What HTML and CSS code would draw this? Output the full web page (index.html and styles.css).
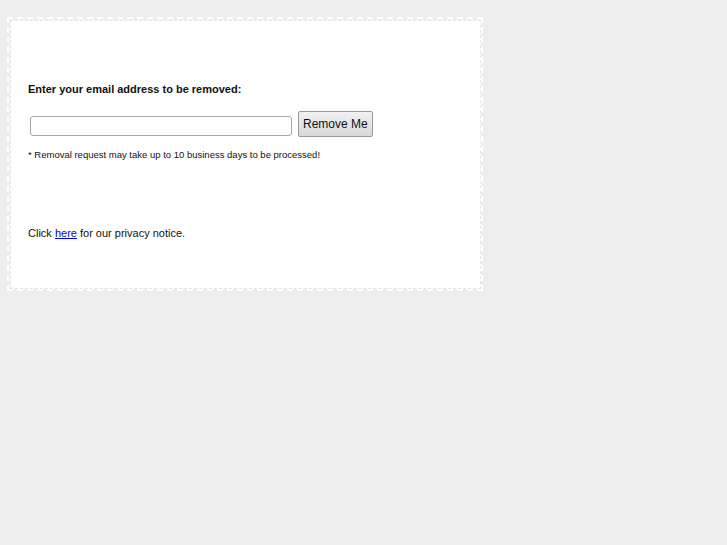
FILE: index.html
```html
<!DOCTYPE html>
<html>
<head>
<meta charset="utf-8">
<link rel="stylesheet" href="styles.css">
</head>
<body>
<div class="frame">
  <div class="panel">
    <p class="label">Enter your email address to be removed:</p>
    <form class="row" onsubmit="return false">
      <input class="email" type="text">
      <button class="btn" type="button">Remove Me</button>
    </form>
    <p class="note">* Removal request may take up to 10 business days to be processed!</p>
    <p class="privacy">Click <a class="link" href="#">here</a> for our privacy notice.</p>
  </div>
</div>
</body>
</html>
```
FILE: styles.css
```css
html, body {
  margin: 0;
  padding: 0;
  background: #eeeeee;
  font-family: "Liberation Sans", Arial, sans-serif;
  color: #111;
}
body {
  padding: 17px 0 0 7px;
}
.frame {
  width: 471px;
  border: 2px dashed #ffffff;
  padding: 1px 0 0 1px;
  box-sizing: content-box;
}
.panel {
  background: #ffffff;
  border: 1px dashed #e6e6e6;
  height: 267px;
  padding: 0 17px;
  overflow: hidden;
}
.label {
  margin: 61px 0 0;
  font-size: 11px;
  font-weight: bold;
  line-height: 14px;
}
.row {
  display: flex;
  align-items: center;
  gap: 6px;
  margin: 15px 0 0 2px;
}
.email {
  width: 262px;
  height: 20px;
  box-sizing: border-box;
  border: 1px solid #a8a8a8;
  border-radius: 3px;
  margin: 3px 0 0;
  padding: 0 4px;
  background: #fff;
}
.btn {
  height: 26px;
  padding: 0 4px;
  border: 1px solid #9a9a9a;
  border-radius: 2px;
  background: linear-gradient(#f2f2f2, #d8d8d8);
  font-family: "Liberation Sans", Arial, sans-serif;
  font-size: 12px;
  color: #111;
}
.note {
  margin: 12px 0 0;
  font-size: 9.5px;
  line-height: 12px;
}
.privacy {
  margin: 65px 0 0;
  font-size: 11px;
  line-height: 14px;
}
.link, .link:visited {
  color: #0000ee;
}
```
